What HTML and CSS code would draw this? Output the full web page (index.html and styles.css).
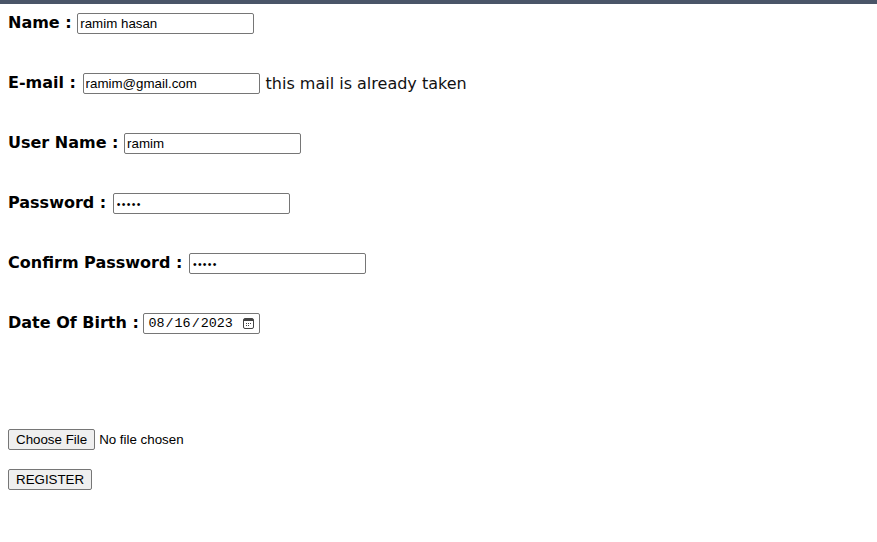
FILE: index.html
```html
<!DOCTYPE html>
<html>
<head>
<meta charset="utf-8">
<link rel="stylesheet" href="styles.css">
</head>
<body>
<div class="topbar"></div>
<form class="form">
  <div class="fields">
    <div class="field"><label class="label" for="name">Name : </label><input class="text" id="name" type="text" value="ramim hasan"></div>
    <div class="field"><label class="label label-wide" for="email">E-mail : </label><input class="text" id="email" type="text" value="ramim@gmail.com"><span class="note">this mail is already taken</span></div>
    <div class="field"><label class="label" for="user">User Name : </label><input class="text" id="user" type="text" value="ramim"></div>
    <div class="field"><label class="label label-wide" for="pass">Password : </label><input class="text pw" id="pass" type="password" value="12345"></div>
    <div class="field"><label class="label label-wide" for="cpass">Confirm Password : </label><input class="text pw" id="cpass" type="password" value="12345"></div>
    <div class="field"><label class="label label-narrow" for="dob">Date Of Birth : </label><input class="date" id="dob" type="date" value="2023-08-16"></div>
  </div>
  <div class="actions">
    <div class="action"><input class="file" type="file"></div>
    <div class="action"><button class="btn" type="button">REGISTER</button></div>
  </div>
</form>
</body>
</html>
```
FILE: styles.css
```css
html, body {
  margin: 0;
  padding: 0;
  background: #fff;
}
body {
  font-family: "DejaVu Sans", Verdana, sans-serif;
  font-size: 16px;
  color: #000;
}
.topbar {
  height: 4px;
  background: #4a5568;
}
.form {
  padding: 9px 8px 0;
}
.fields {
  display: flex;
  flex-direction: column;
  gap: 39px;
}
.field {
  display: flex;
  align-items: center;
  height: 21px;
}
.label {
  font-weight: bold;
  white-space: pre;
  padding-bottom: 2px;
  color: #000;
}
.label-wide {
  margin-right: 1px;
}
.label-narrow {
  margin-right: -1px;
}
.text, .date {
  box-sizing: border-box;
  height: 21px;
  width: 177px;
  margin: 0;
  padding: 1px 2px;
  border: 1px solid #767676;
  border-radius: 2px;
  font-family: "Liberation Sans", Arial, sans-serif;
  font-size: 13.333px;
  color: #000;
  background: #fff;
  outline: none;
}
.pw {
  font-size: 10.5px;
  letter-spacing: 1.3px;
  padding-left: 3px;
}
.date {
  width: 117px;
  font-family: "Liberation Mono", "DejaVu Sans Mono", monospace;
  font-size: 13.4px;
  padding: 1px 3px;
}
.date::-webkit-calendar-picker-indicator {
  width: 11px;
  height: 11px;
  padding: 0;
  margin: 0 2px 0 0;
  background-image: url("data:image/svg+xml,%3Csvg xmlns='http://www.w3.org/2000/svg' viewBox='0 0 11 11'%3E%3Crect x='0.5' y='0.5' width='10' height='10' rx='1.5' fill='none' stroke='%23444'/%3E%3Crect x='1' y='1' width='9' height='2' fill='%23444'/%3E%3Crect x='3' y='5' width='1' height='1' fill='%23444'/%3E%3Crect x='5' y='5' width='1' height='1' fill='%23444'/%3E%3Crect x='7' y='5' width='1' height='1' fill='%23444'/%3E%3Crect x='3' y='7' width='1' height='1' fill='%23444'/%3E%3Crect x='5' y='7' width='1' height='1' fill='%23444'/%3E%3C/svg%3E");
  background-size: 11px 11px;
  background-repeat: no-repeat;
}
.note {
  margin-left: 6px;
  color: #111;
}
.actions {
  display: flex;
  flex-direction: column;
  gap: 19px;
  margin-top: 95px;
}
.action {
  display: flex;
  height: 21px;
}
.file {
  font-family: "Liberation Sans", Arial, sans-serif;
  font-size: 13.333px;
  margin: 0;
}
.file::file-selector-button, .btn {
  font-family: "Liberation Sans", Arial, sans-serif;
  font-size: 13.333px;
  background: #efefef;
  border: 1px solid #767676;
  border-radius: 2px;
  padding: 1px 7px;
  height: 21px;
  color: #000;
}
.file::file-selector-button {
  margin-right: 4px;
}
.btn {
  margin: 0;
}
```
